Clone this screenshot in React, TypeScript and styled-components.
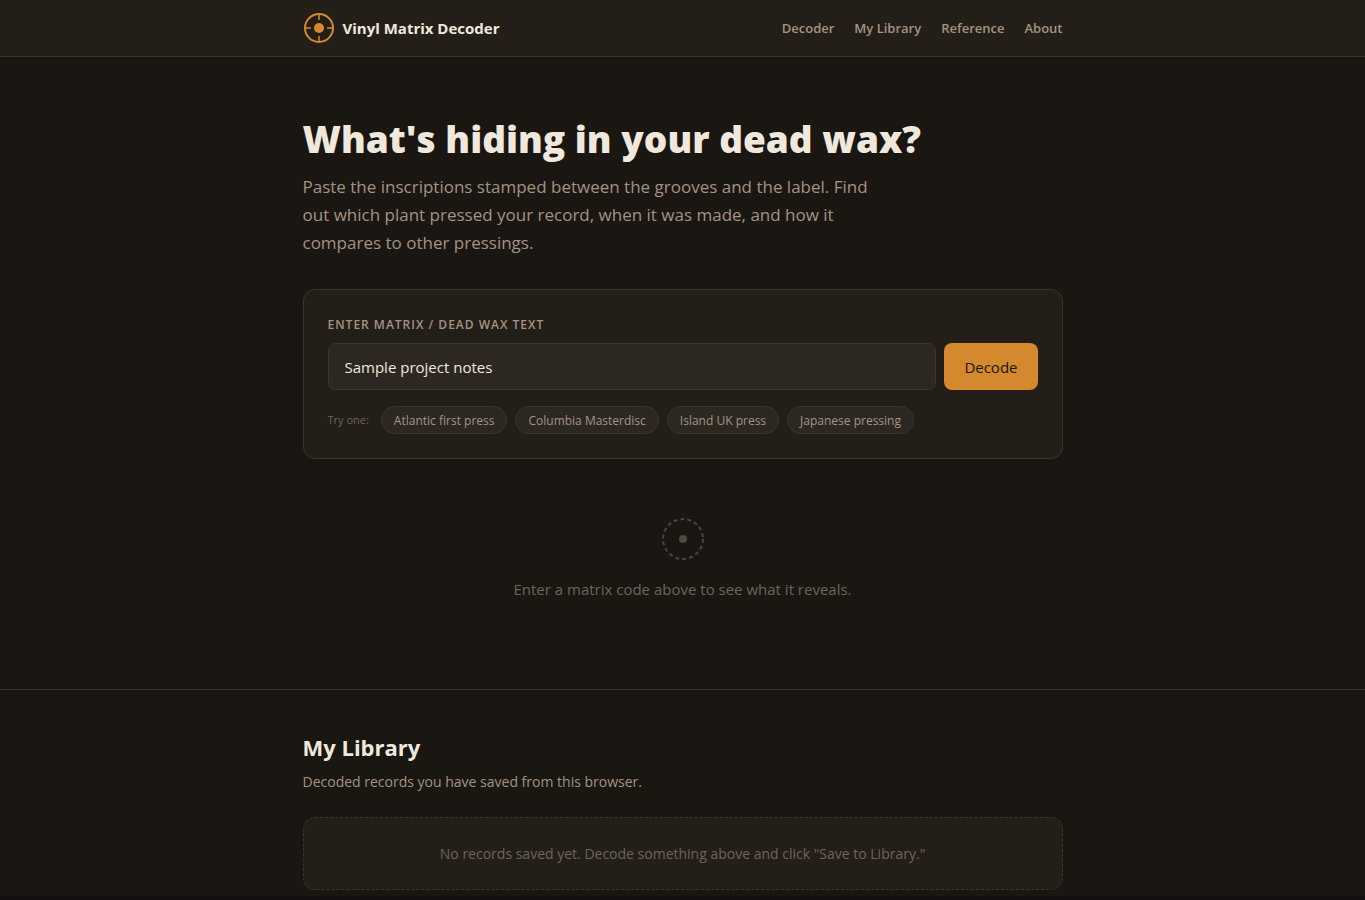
import React, { useState } from "react";
import styled, { createGlobalStyle } from "styled-components";

const color = {
  bg: "#1a1612",
  surface: "#231e18",
  raised: "#2d2721",
  border: "#3a342b",
  text: "#f0e8dc",
  muted: "#a39382",
  dim: "#6e6458",
  accent: "#d4892e",
};

const GlobalStyle = createGlobalStyle`
  *, *::before, *::after { box-sizing: border-box; }
  html { background: #130f0e; }
  body {
    margin: 0;
    color: ${color.text};
    font-family: "Segoe UI", "Open Sans", "Noto Sans", sans-serif;
    font-size: 15px;
    line-height: 24px;
  }
  h1, h2, p { margin: 0; }
  button, input { font: inherit; }
`;

const Page = styled.div`
  background: ${color.bg};
`;

const Container = styled.div`
  width: 100%;
  max-width: 800px;
  margin: 0 auto;
  padding: 0 20px;
`;

const Header = styled.header`
  background: ${color.surface};
  border-bottom: 1px solid ${color.border};
`;

const HeaderRow = styled(Container)`
  display: flex;
  align-items: center;
  justify-content: space-between;
  min-height: 56px;
`;

const Brand = styled.a`
  display: flex;
  align-items: center;
  gap: 8px;
  color: ${color.text};
  font-weight: 700;
  text-decoration: none;
`;

const Nav = styled.nav`
  display: flex;
  gap: 20px;
`;

const NavLink = styled.a`
  color: ${color.muted};
  font-size: 13px;
  font-weight: 600;
  text-decoration: none;
`;

const Hero = styled.section`
  padding: 56px 0 32px;
`;

const Title = styled.h1`
  font-size: 37px;
  font-weight: 800;
  line-height: 52px;
  margin-bottom: 8px;
`;

const Lead = styled.p`
  max-width: 580px;
  color: ${color.muted};
  font-size: 17px;
  line-height: 28px;
`;

const Card = styled.form`
  padding: 24px;
  background: ${color.surface};
  border: 1px solid ${color.border};
  border-radius: 12px;
`;

const FieldLabel = styled.label`
  display: block;
  margin-bottom: 8px;
  color: ${color.muted};
  font-size: 12px;
  font-weight: 600;
  line-height: 21px;
  letter-spacing: 1px;
  text-transform: uppercase;
`;

const InputRow = styled.div`
  display: flex;
  gap: 8px;
`;

const TextInput = styled.input`
  flex: 1;
  min-width: 0;
  height: 47px;
  padding: 0 16px;
  color: ${color.text};
  background: ${color.raised};
  border: 1px solid ${color.border};
  border-radius: 8px;
  outline: none;
`;

const DecodeButton = styled.button`
  padding: 0 20px;
  color: ${color.bg};
  background: ${color.accent};
  border: 0;
  border-radius: 8px;
  font-weight: 500;
`;

const Examples = styled.div`
  display: flex;
  flex-wrap: wrap;
  align-items: center;
  gap: 8px;
  margin-top: 16px;
`;

const ExamplesLabel = styled.span`
  margin-right: 4px;
  color: ${color.dim};
  font-size: 11px;
`;

const Chip = styled.button`
  height: 28px;
  padding: 2px 12px 0;
  color: ${color.muted};
  background: ${color.raised};
  border: 1px solid ${color.border};
  border-radius: 14px;
  font-size: 12px;
`;

const EmptyState = styled.section`
  display: flex;
  flex-direction: column;
  align-items: center;
  gap: 14px;
  padding: 56px 0 88px;
  color: ${color.dim};
`;

const Library = styled.section`
  padding: 44px 0 6px;
  border-top: 1px solid ${color.border};
`;

const LibraryTitle = styled.h2`
  font-size: 22px;
  font-weight: 700;
  line-height: 26px;
  margin-bottom: 10px;
`;

const LibraryIntro = styled.p`
  color: ${color.muted};
  font-size: 14px;
  line-height: 23px;
  margin-bottom: 24px;
`;

const LibraryEmpty = styled.p`
  padding: 24px;
  color: ${color.dim};
  background: ${color.surface};
  border: 1px dashed ${color.border};
  border-radius: 12px;
  font-size: 14px;
  line-height: 23px;
  text-align: center;
`;

const Logo = () => (
  <svg width="32" height="32" viewBox="0 0 32 32" fill="none" stroke={color.accent} strokeWidth="2" aria-hidden="true">
    <circle cx="16" cy="16" r="14" />
    <circle cx="16" cy="16" r="5" fill={color.accent} stroke="none" />
    <path d="M16 2v6M16 24v6M2 16h6M24 16h6" strokeWidth="1.5" />
  </svg>
);

const EmptyDisc = () => (
  <svg width="48" height="48" viewBox="0 0 48 48" aria-hidden="true">
    <circle cx="24" cy="24" r="20" fill="none" stroke="#4a443a" strokeWidth="2" strokeDasharray="4 3" />
    <circle cx="24" cy="24" r="4" fill="#4f493f" />
  </svg>
);

const links = ["Decoder", "My Library", "Reference", "About"];
const examples = ["Atlantic first press", "Columbia Masterdisc", "Island UK press", "Japanese pressing"];

export default function App() {
  const [matrix, setMatrix] = useState("Sample project notes");
  return (
    <>
      <GlobalStyle />
      <Page>
        <Header>
          <HeaderRow>
            <Brand href="#">
              <Logo />
              Vinyl Matrix Decoder
            </Brand>
            <Nav>
              {links.map((name) => (
                <NavLink key={name} href="#">{name}</NavLink>
              ))}
            </Nav>
          </HeaderRow>
        </Header>
        <main>
          <Container>
            <Hero>
              <Title>What's hiding in your dead wax?</Title>
              <Lead>
                Paste the inscriptions stamped between the grooves and the label. Find out which plant pressed your
                record, when it was made, and how it compares to other pressings.
              </Lead>
            </Hero>
            <Card onSubmit={(e) => e.preventDefault()}>
              <FieldLabel htmlFor="matrix">Enter matrix / dead wax text</FieldLabel>
              <InputRow>
                <TextInput id="matrix" type="text" value={matrix} onChange={(e) => setMatrix(e.target.value)} />
                <DecodeButton type="submit">Decode</DecodeButton>
              </InputRow>
              <Examples>
                <ExamplesLabel>Try one:</ExamplesLabel>
                {examples.map((name) => (
                  <Chip key={name} type="button">{name}</Chip>
                ))}
              </Examples>
            </Card>
            <EmptyState>
              <EmptyDisc />
              <p>Enter a matrix code above to see what it reveals.</p>
            </EmptyState>
          </Container>
          <Library>
            <Container>
              <LibraryTitle>My Library</LibraryTitle>
              <LibraryIntro>Decoded records you have saved from this browser.</LibraryIntro>
              <LibraryEmpty>No records saved yet. Decode something above and click "Save to Library."</LibraryEmpty>
            </Container>
          </Library>
        </main>
      </Page>
    </>
  );
}
